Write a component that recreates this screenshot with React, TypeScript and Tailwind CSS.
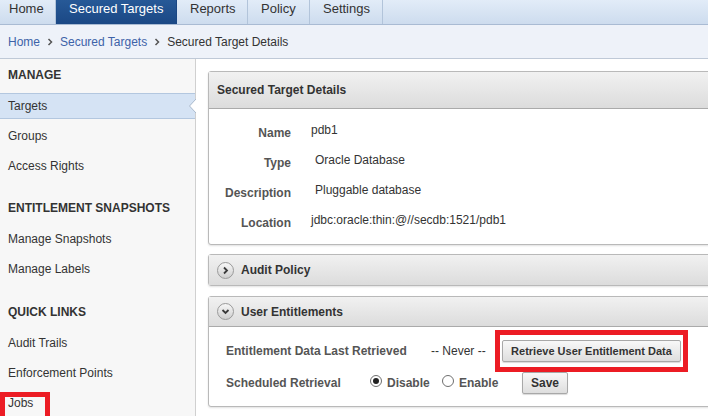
const tabs = [
  { label: 'Home', cls: 'w-[56px] pl-[9px]', active: false },
  { label: 'Secured Targets', cls: 'w-[121px] pl-[13px]', active: true },
  { label: 'Reports', cls: 'w-[71px] pl-[13px]', active: false },
  { label: 'Policy', cls: 'w-[62px] pl-[13px]', active: false },
  { label: 'Settings', cls: 'w-[73px] pl-[13px]', active: false },
];

const sections = [
  { title: 'MANAGE', cls: '', items: ['Targets', 'Groups', 'Access Rights'] },
  { title: 'ENTITLEMENT SNAPSHOTS', cls: 'mt-[11px]', items: ['Manage Snapshots', 'Manage Labels'] },
  { title: 'QUICK LINKS', cls: 'mt-[12px]', items: ['Audit Trails', 'Enforcement Points', 'Jobs'] },
];

const details = [
  { label: 'Name', value: 'pdb1', cls: 'pl-0' },
  { label: 'Type', value: 'Oracle Database', cls: 'pl-[4px]' },
  { label: 'Description', value: 'Pluggable database', cls: 'pl-[4px]' },
  { label: 'Location', value: 'jdbc:oracle:thin:@//secdb:1521/pdb1', cls: 'pl-0' },
];

function Crumb() {
  return (
    <svg width="6" height="8" viewBox="0 0 6 8" className="mx-[7px]">
      <path d="M1.5 1 L4.5 4 L1.5 7" fill="none" stroke="#555" strokeWidth="1.5" />
    </svg>
  );
}

function CircleToggle({ open }: { open: boolean }) {
  return (
    <span className="flex h-[17px] w-[17px] items-center justify-center rounded-full border border-[#9a9a9a] bg-gradient-to-b from-[#f7f7f7] to-[#cfcfcf]">
      <svg width="9" height="9" viewBox="0 0 9 9">
        {open ? (
          <path d="M1.5 3 L4.5 6 L7.5 3" fill="none" stroke="#3a3a3a" strokeWidth="1.8" />
        ) : (
          <path d="M3 1.5 L6 4.5 L3 7.5" fill="none" stroke="#3a3a3a" strokeWidth="1.8" />
        )}
      </svg>
    </span>
  );
}

function Radio({ checked }: { checked: boolean }) {
  return (
    <span className="mb-[5px] flex h-[12px] w-[12px] items-center justify-center rounded-full border border-[#6f6f6f] bg-white">
      {checked && <span className="h-[6px] w-[6px] rounded-full bg-[#222]" />}
    </span>
  );
}

export default function App() {
  return (
    <div className="flex h-[416px] w-[708px] flex-col overflow-hidden bg-white font-['Liberation_Sans',Arial,sans-serif] text-[12px] text-[#333]">
      {/* tabs */}
      <div className="flex h-[25px] shrink-0 border-b border-[#a9bbd3] bg-gradient-to-b from-[#e2ecf8] to-[#cddcee]">
        {tabs.map((t) => (
          <div
            key={t.label}
            className={`${t.cls} flex h-full items-start border-r pt-[1px] text-[13px] leading-[16px] ${
              t.active
                ? 'border-[#1a4683] bg-gradient-to-b from-[#275997] to-[#1b4885] text-white'
                : 'border-[#b2c4da] text-[#333]'
            }`}
          >
            {t.label}
          </div>
        ))}
      </div>

      {/* breadcrumb */}
      <div className="flex h-[34px] shrink-0 items-center border-b border-[#bfc9d7] bg-[#eef2f9] pl-[8px]">
        <span className="text-[#3d62a8]">Home</span>
        <Crumb />
        <span className="text-[#3d62a8]">Secured Targets</span>
        <Crumb />
        <span>Secured Target Details</span>
      </div>

      <div className="flex min-h-0 flex-1">
        {/* sidebar */}
        <div className="w-[196px] shrink-0 border-r border-[#d0d0d0] bg-[#f7f7f7]">
          {sections.map((s) => (
            <div key={s.title} className={s.cls}>
              <div className="flex h-[32px] items-center pl-[8px] font-bold">{s.title}</div>
              {s.items.map((item) =>
                item === 'Targets' ? (
                  <div
                    key={item}
                    className="relative my-[2px] flex h-[26px] items-center border-y border-[#b3c7df] bg-[#d5e3f4] pl-[8px]"
                  >
                    {item}
                    <svg width="7" height="14" viewBox="0 0 7 14" className="absolute right-[-1px] top-[5px]">
                      <polygon points="7,0 0.5,7 7,14" fill="#fff" />
                      <polyline points="7,0 0.5,7 7,14" fill="none" stroke="#a9b9cc" strokeWidth="1" />
                    </svg>
                  </div>
                ) : (
                  <div key={item} className="relative flex h-[30px] items-center pl-[8px]">
                    {item}
                    {item === 'Jobs' && (
                      <span className="absolute left-0 top-[4px] h-[30px] w-[50px] border-[5px] border-[#ec1c24]" />
                    )}
                  </div>
                )
              )}
            </div>
          ))}
        </div>

        {/* main */}
        <div className="min-w-0 flex-1 overflow-hidden pl-[12px] pt-[12px]">
          <div className="w-[540px] rounded-[3px] border border-[#b9b9b9] bg-white shadow-[0_1px_2px_rgba(0,0,0,0.12)]">
            <div className="flex h-[37px] items-center border-b border-[#aaaaaa] bg-gradient-to-b from-[#f1f1f1] to-[#dcdcdc] pl-[8px] font-bold">
              Secured Target Details
            </div>
            <div className="pb-[7px] pt-[8px]">
              {details.map((d) => (
                <div key={d.label} className="flex h-[30px] items-center">
                  <span className="mt-[1px] w-[82px] text-right font-bold text-[#555]">{d.label}</span>
                  <span className={`ml-[20px] mb-[4px] ${d.cls}`}>{d.value}</span>
                </div>
              ))}
            </div>
          </div>

          <div className="mt-[9px] w-[540px] rounded-[3px] border border-[#b9b9b9] shadow-[0_1px_2px_rgba(0,0,0,0.12)]">
            <div className="flex h-[30px] items-center gap-[7px] bg-gradient-to-b from-[#f1f1f1] to-[#dcdcdc] pl-[8px] font-bold">
              <CircleToggle open={false} />
              Audit Policy
            </div>
          </div>

          <div className="mt-[10px] w-[540px] rounded-[3px] border border-[#b9b9b9] bg-white shadow-[0_1px_2px_rgba(0,0,0,0.12)]">
            <div className="flex h-[30px] items-center gap-[7px] border-b border-[#aaaaaa] bg-gradient-to-b from-[#f1f1f1] to-[#dcdcdc] pl-[8px] font-bold">
              <CircleToggle open={true} />
              User Entitlements
            </div>
            <div className="pb-[11px] pl-[17px] pt-[12px]">
              <div className="flex h-[24px] items-center">
                <span className="w-[205px] font-bold text-[#555]">Entitlement Data Last Retrieved</span>
                <span className="w-[71px]">-- Never --</span>
                <span className="relative">
                  <button className="flex h-[22px] w-[179px] items-center justify-center rounded-[2px] border border-[#a8a8a8] bg-gradient-to-b from-[#f8f8f8] to-[#dedede] text-[11px] font-bold text-[#333] shadow-[0_1px_1px_rgba(0,0,0,0.15)]">
                    Retrieve User Entitlement Data
                  </button>
                  <span className="absolute -bottom-[10px] -left-[7px] -right-[7px] -top-[10px] border-[5px] border-[#ec1c24]" />
                </span>
              </div>
              <div className="mt-[8px] flex h-[24px] items-center">
                <span className="w-[144px] font-bold text-[#555]">Scheduled Retrieval</span>
                <span className="flex w-[72px] items-center gap-[5px]">
                  <Radio checked={true} />
                  <span className="font-bold text-[#555]">Disable</span>
                </span>
                <span className="flex w-[80px] items-center gap-[5px]">
                  <Radio checked={false} />
                  <span className="font-bold text-[#555]">Enable</span>
                </span>
                <button className="flex h-[22px] w-[46px] items-center justify-center rounded-[2px] border border-[#a8a8a8] bg-gradient-to-b from-[#f8f8f8] to-[#dedede] font-bold text-[#333] shadow-[0_1px_1px_rgba(0,0,0,0.15)]">
                  Save
                </button>
              </div>
            </div>
          </div>
        </div>
      </div>
    </div>
  );
}
